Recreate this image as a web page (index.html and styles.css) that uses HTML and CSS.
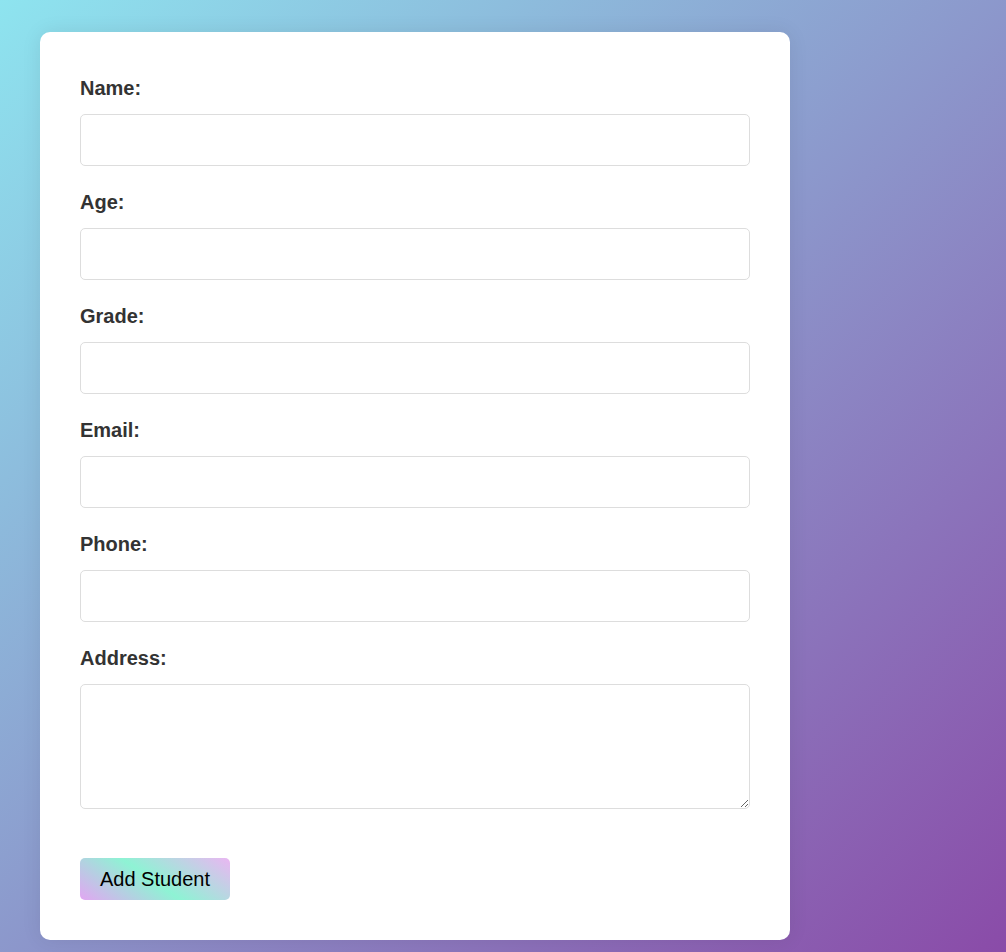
FILE: index.html
```html
<!DOCTYPE html>
<html lang="en">
<head>
<meta charset="utf-8">
<title>Add Student</title>
<link rel="stylesheet" href="styles.css">
</head>
<body>
  <div class="card">
    <form class="student-form">
      <div class="field">
        <label class="label" for="name">Name:</label>
        <input class="input" id="name" type="text">
      </div>
      <div class="field">
        <label class="label" for="age">Age:</label>
        <input class="input" id="age" type="text">
      </div>
      <div class="field">
        <label class="label" for="grade">Grade:</label>
        <input class="input" id="grade" type="text">
      </div>
      <div class="field">
        <label class="label" for="email">Email:</label>
        <input class="input" id="email" type="text">
      </div>
      <div class="field">
        <label class="label" for="phone">Phone:</label>
        <input class="input" id="phone" type="text">
      </div>
      <div class="field field-last">
        <label class="label" for="address">Address:</label>
        <textarea class="input textarea" id="address"></textarea>
      </div>
      <button class="btn" type="button">Add Student</button>
    </form>
  </div>
</body>
</html>
```

FILE: styles.css
```css
html, body {
  margin: 0;
  padding: 0;
}

body {
  min-height: 100vh;
  box-sizing: border-box;
  padding: 32px 40px 12px;
  background: linear-gradient(to bottom right, #8ee4ef, #8a4ba8);
  font-family: "Liberation Sans", Arial, sans-serif;
}

.card {
  width: 750px;
  box-sizing: border-box;
  background: #ffffff;
  border-radius: 10px;
  padding: 45px 40px 40px;
  box-shadow: 0 0 20px rgba(0, 0, 0, 0.08);
}

.student-form {
  display: flex;
  flex-direction: column;
  align-items: flex-start;
}

.field {
  width: 100%;
  display: flex;
  flex-direction: column;
  margin-bottom: 25px;
}

.field-last {
  margin-bottom: 49px;
}

.label {
  font-size: 20px;
  line-height: 23px;
  font-weight: bold;
  color: #333333;
  margin-bottom: 14px;
}

.input {
  display: block;
  width: 100%;
  height: 52px;
  box-sizing: border-box;
  border: 1px solid #dddddd;
  border-radius: 5px;
  padding: 10px;
  font-family: "Liberation Sans", Arial, sans-serif;
  font-size: 16px;
  background: #ffffff;
  margin: 0;
}

.textarea {
  height: 125px;
  resize: vertical;
}

.btn {
  height: 42px;
  width: 150px;
  padding: 0;
  border: none;
  border-radius: 5px;
  font-family: "Liberation Sans", Arial, sans-serif;
  font-size: 20px;
  color: #000000;
  background: linear-gradient(35deg, #e2a6f2 0%, #8ef3d4 48%, #eab6f2 100%);
  cursor: pointer;
}
```
